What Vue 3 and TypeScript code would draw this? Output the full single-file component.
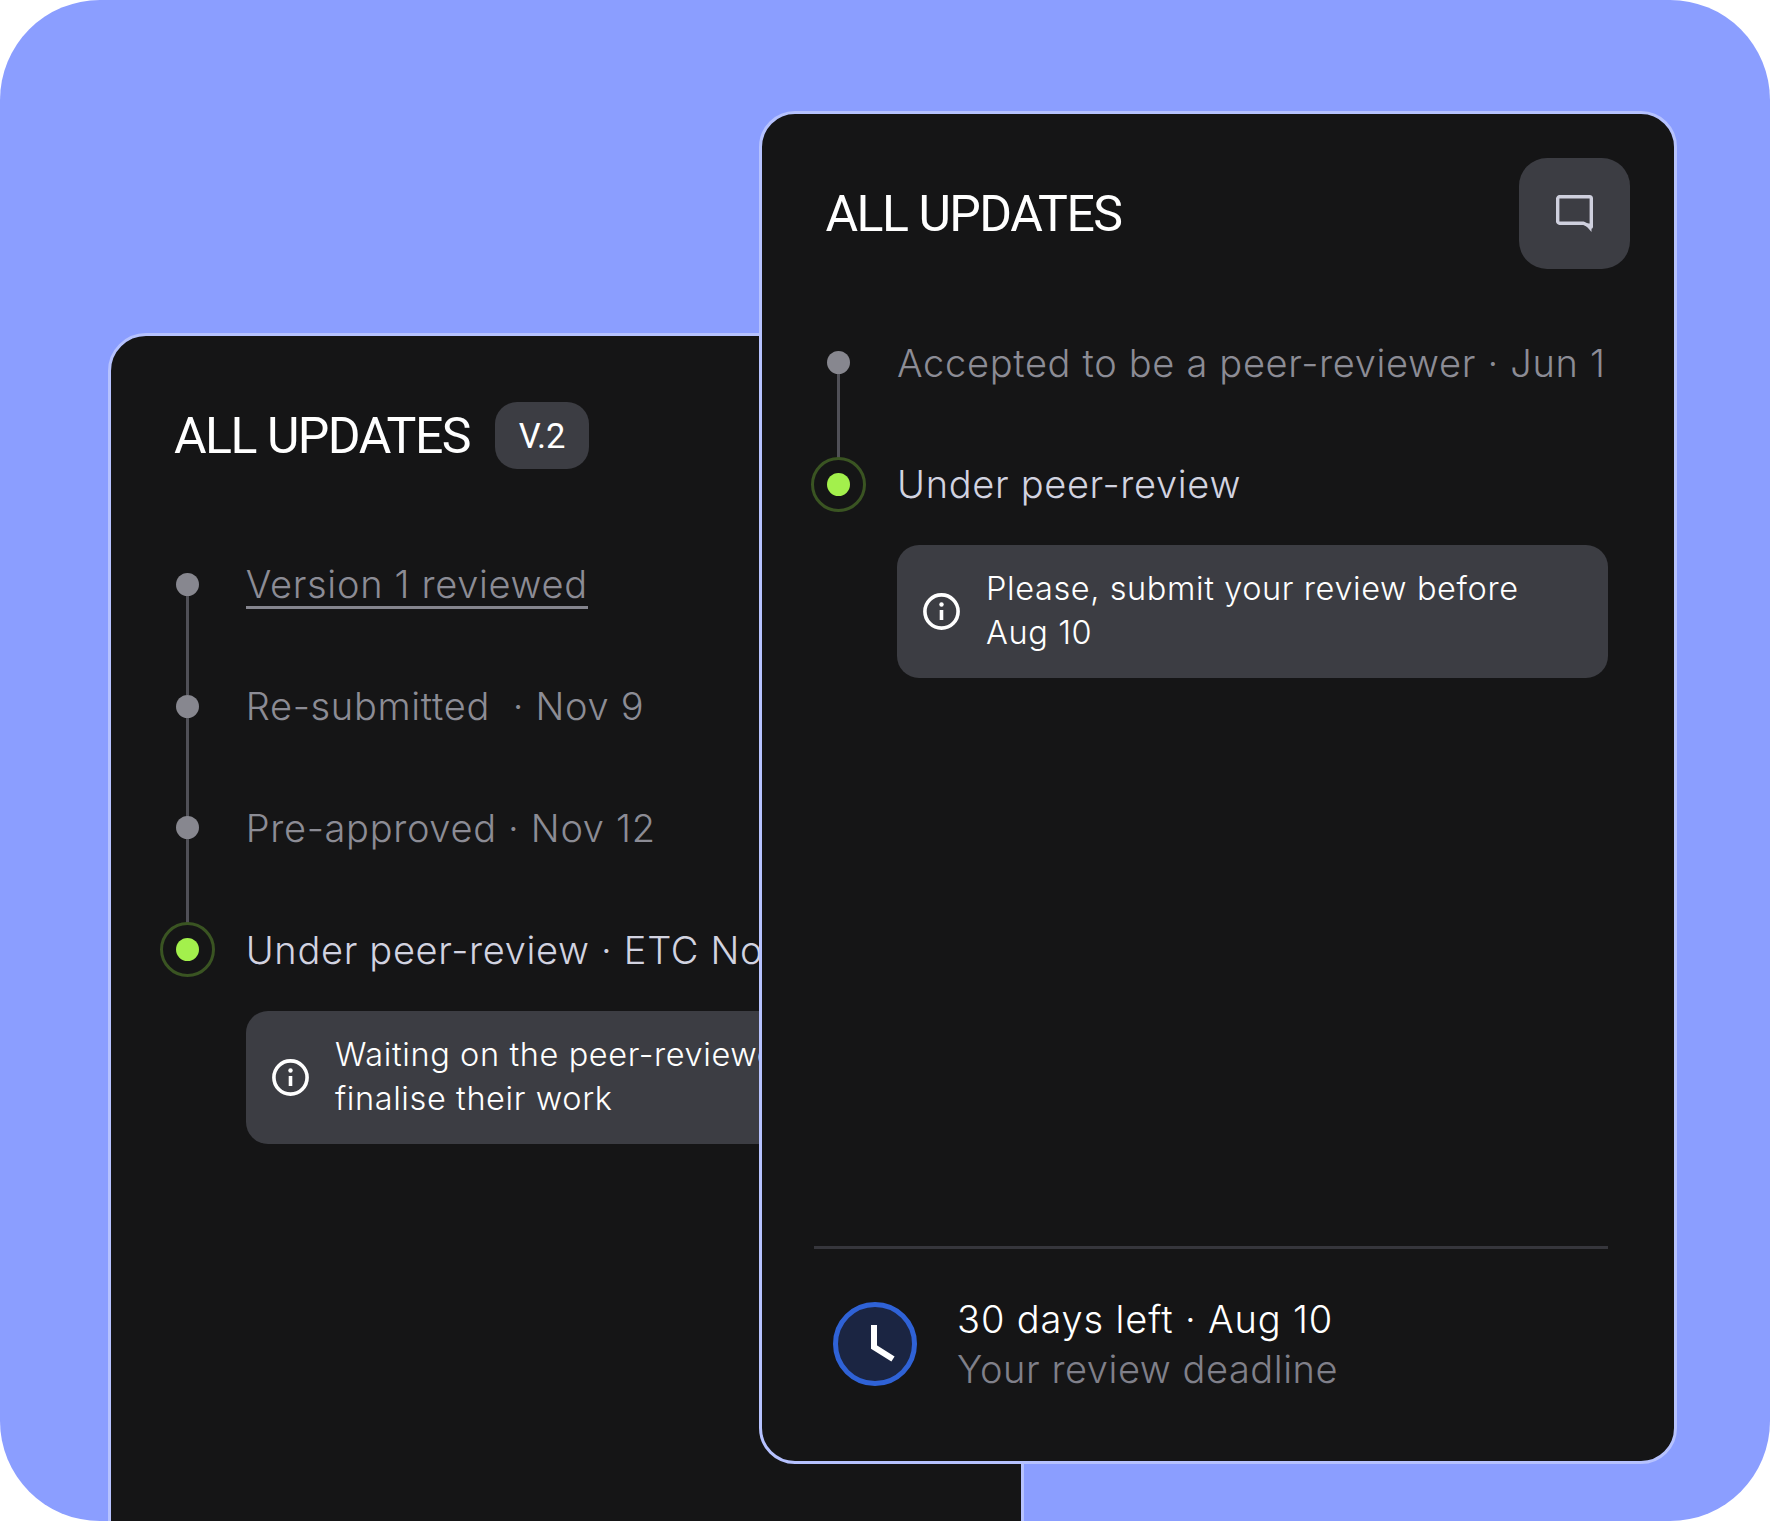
<script setup lang="ts">
interface Step {
  label: string
  active?: boolean
  link?: boolean
}

const leftSteps: Step[] = [
  { label: 'Version 1 reviewed', link: true },
  { label: 'Re-submitted \u00a0· Nov 9' },
  { label: 'Pre-approved · Nov 12' },
  { label: 'Under peer-review · ETC Nov 30', active: true },
]

const rightSteps: Step[] = [
  { label: 'Accepted to be a peer-reviewer · Jun 1' },
  { label: 'Under peer-review', active: true },
]
</script>

<template>
  <main class="stage">
    <section class="card card-back">
      <header class="head head-back">
        <h2 class="title">ALL UPDATES</h2>
        <span class="badge">V.2</span>
      </header>
      <ol class="steps steps-back">
        <li v-for="step in leftSteps" :key="step.label" class="step" :class="{ active: step.active }">
          <span class="marker"><i class="dot"></i></span>
          <span class="label" :class="{ link: step.link }">{{ step.label }}</span>
        </li>
      </ol>
      <div class="note note-back">
        <svg class="info" viewBox="0 0 37 37" fill="none" stroke="#fff" stroke-width="3.6">
          <circle cx="18.5" cy="18.5" r="16.6" />
          <path d="M18.5 17v10" />
          <circle cx="18.5" cy="11.5" r="2.2" fill="#fff" stroke="none" />
        </svg>
        <p>Waiting on the peer-reviewer to<br />finalise their work</p>
      </div>
    </section>

    <section class="card card-front">
      <header class="head head-front">
        <h2 class="title">ALL UPDATES</h2>
        <button class="chat" type="button" aria-label="Comments">
          <svg viewBox="0 0 37 37" width="37" height="37" fill="none">
            <path
              d="M3.5 1.8H33.5A1.8 1.8 0 0 1 35.3 3.6V32L27.5 28.2H3.5A1.8 1.8 0 0 1 1.7 26.4V3.6A1.8 1.8 0 0 1 3.5 1.8Z"
              stroke="#cfd0de"
              stroke-width="3.4"
              stroke-linejoin="round"
            />
            <path d="M28 28.5H35.5V37Z" fill="#cfd0de" />
          </svg>
        </button>
      </header>
      <ol class="steps steps-front">
        <li v-for="step in rightSteps" :key="step.label" class="step" :class="{ active: step.active }">
          <span class="marker"><i class="dot"></i></span>
          <span class="label">{{ step.label }}</span>
        </li>
      </ol>
      <div class="note note-front">
        <svg class="info" viewBox="0 0 37 37" fill="none" stroke="#fff" stroke-width="3.6">
          <circle cx="18.5" cy="18.5" r="16.6" />
          <path d="M18.5 17v10" />
          <circle cx="18.5" cy="11.5" r="2.2" fill="#fff" stroke="none" />
        </svg>
        <p>Please, submit your review before<br />Aug 10</p>
      </div>
      <footer class="deadline">
        <svg class="clock" viewBox="0 0 84 84" fill="none">
          <circle cx="42" cy="42" r="39.5" fill="#1b2542" stroke="#2f62d6" stroke-width="5" />
          <path d="M41 23V45L60 57" stroke="#fff" stroke-width="6" />
        </svg>
        <div class="deadline-text">
          <strong>30 days left · Aug 10</strong>
          <span>Your review deadline</span>
        </div>
      </footer>
    </section>
  </main>
</template>

<style>
html,
body {
  margin: 0;
  background: #fff;
}
</style>

<style scoped>
.stage {
  display: grid;
  grid-template: 1521px / 1770px;
  width: 1770px;
  height: 1521px;
  overflow: hidden;
  border-radius: 100px;
  background: #8b9eff;
  font-family: Inter, "Liberation Sans", sans-serif;
}
.card {
  grid-area: 1 / 1;
  box-sizing: border-box;
  display: flex;
  flex-direction: column;
  align-items: flex-start;
  align-self: start;
  justify-self: start;
  border: 3px solid #b6c2ff;
  background: #151516;
}
.card-back {
  width: 916px;
  height: 1300px;
  margin: 333px 0 0 108px;
  padding: 66px 0 0 63px;
  border-radius: 38px;
}
.card-front {
  position: relative;
  z-index: 1;
  width: 918px;
  height: 1353px;
  margin: 111px 0 0 759px;
  padding: 44px 44px 0 63.5px;
  border-radius: 36px;
}
.head {
  display: flex;
  align-items: center;
  color: #fff;
}
.head-back {
  gap: 25px;
}
.head-front {
  justify-content: space-between;
  align-self: stretch;
}
.title {
  margin: 0;
  font-family: Roboto, "Liberation Sans", sans-serif;
  font-size: 50px;
  font-weight: 400;
  letter-spacing: -1.5px;
  line-height: 60px;
  white-space: nowrap;
}
.badge {
  display: flex;
  align-items: center;
  justify-content: center;
  width: 94px;
  height: 67px;
  border-radius: 22px;
  background: #3c3d43;
  font-family: Roboto, "Liberation Sans", sans-serif;
  font-size: 34.5px;
}
.chat {
  display: flex;
  align-items: center;
  justify-content: center;
  width: 111px;
  height: 111px;
  padding: 0;
  border: 0;
  border-radius: 28px;
  background: #3c3d43;
}
.steps {
  display: flex;
  flex-direction: column;
  gap: 66.7px;
  margin: 0;
  padding: 0;
  list-style: none;
}
.steps-back {
  margin: 88px 0 0 -13.7px;
}
.steps-front {
  margin: 66px 0 0 -14.2px;
}
.step {
  position: relative;
  display: flex;
  align-items: center;
  gap: 30.4px;
  height: 55px;
  color: #8c8c95;
  font-size: 38px;
  font-weight: 350;
  letter-spacing: 0.68px;
  white-space: nowrap;
}
.steps-front .step {
  gap: 30.7px;
}
.step:not(:last-child)::after {
  content: "";
  position: absolute;
  top: 38px;
  left: 26px;
  width: 3px;
  height: 100px;
  background: #505057;
}
.step.active {
  color: #d2d3e0;
}
.marker {
  position: relative;
  z-index: 1;
  display: flex;
  flex: none;
  align-items: center;
  justify-content: center;
  box-sizing: border-box;
  width: 55px;
  height: 55px;
  border-radius: 50%;
}
.active .marker {
  border: 3px solid #3a5422;
  background: #151516;
}
.dot {
  width: 23px;
  height: 23px;
  border-radius: 50%;
  background: #87878f;
}
.active .dot {
  background: #a3f04c;
}
.link {
  padding-top: 2px;
  border-bottom: 3px solid #85858e;
  line-height: 44px;
}
.note {
  display: flex;
  flex: none;
  align-items: center;
  gap: 26px;
  box-sizing: border-box;
  width: 711px;
  height: 133px;
  padding-left: 26px;
  border-radius: 22px;
  background: #3c3d43;
  color: #fff;
  font-size: 32.5px;
  font-weight: 350;
  letter-spacing: 0.6px;
  line-height: 44px;
}
.note p {
  margin: 0;
  white-space: nowrap;
}
.note-back {
  margin: 33.5px 0 0 72px;
}
.note-front {
  margin: 33px 0 0 71.5px;
}
.info {
  flex: none;
  width: 37px;
  height: 37px;
}
.deadline {
  display: flex;
  align-items: center;
  gap: 40px;
  align-self: stretch;
  margin: auto 22px 0 -11.5px;
  padding: 45px 0 67px 19px;
  border-top: 3px solid #36363c;
}
.clock {
  flex: none;
  width: 84px;
  height: 84px;
}
.deadline-text {
  display: flex;
  flex-direction: column;
  font-size: 38px;
  font-weight: 350;
  line-height: 50px;
}
.deadline-text strong {
  color: #fff;
  font-weight: 350;
  letter-spacing: 0.85px;
}
.deadline-text span {
  color: #80808a;
  letter-spacing: 0.55px;
}
</style>
